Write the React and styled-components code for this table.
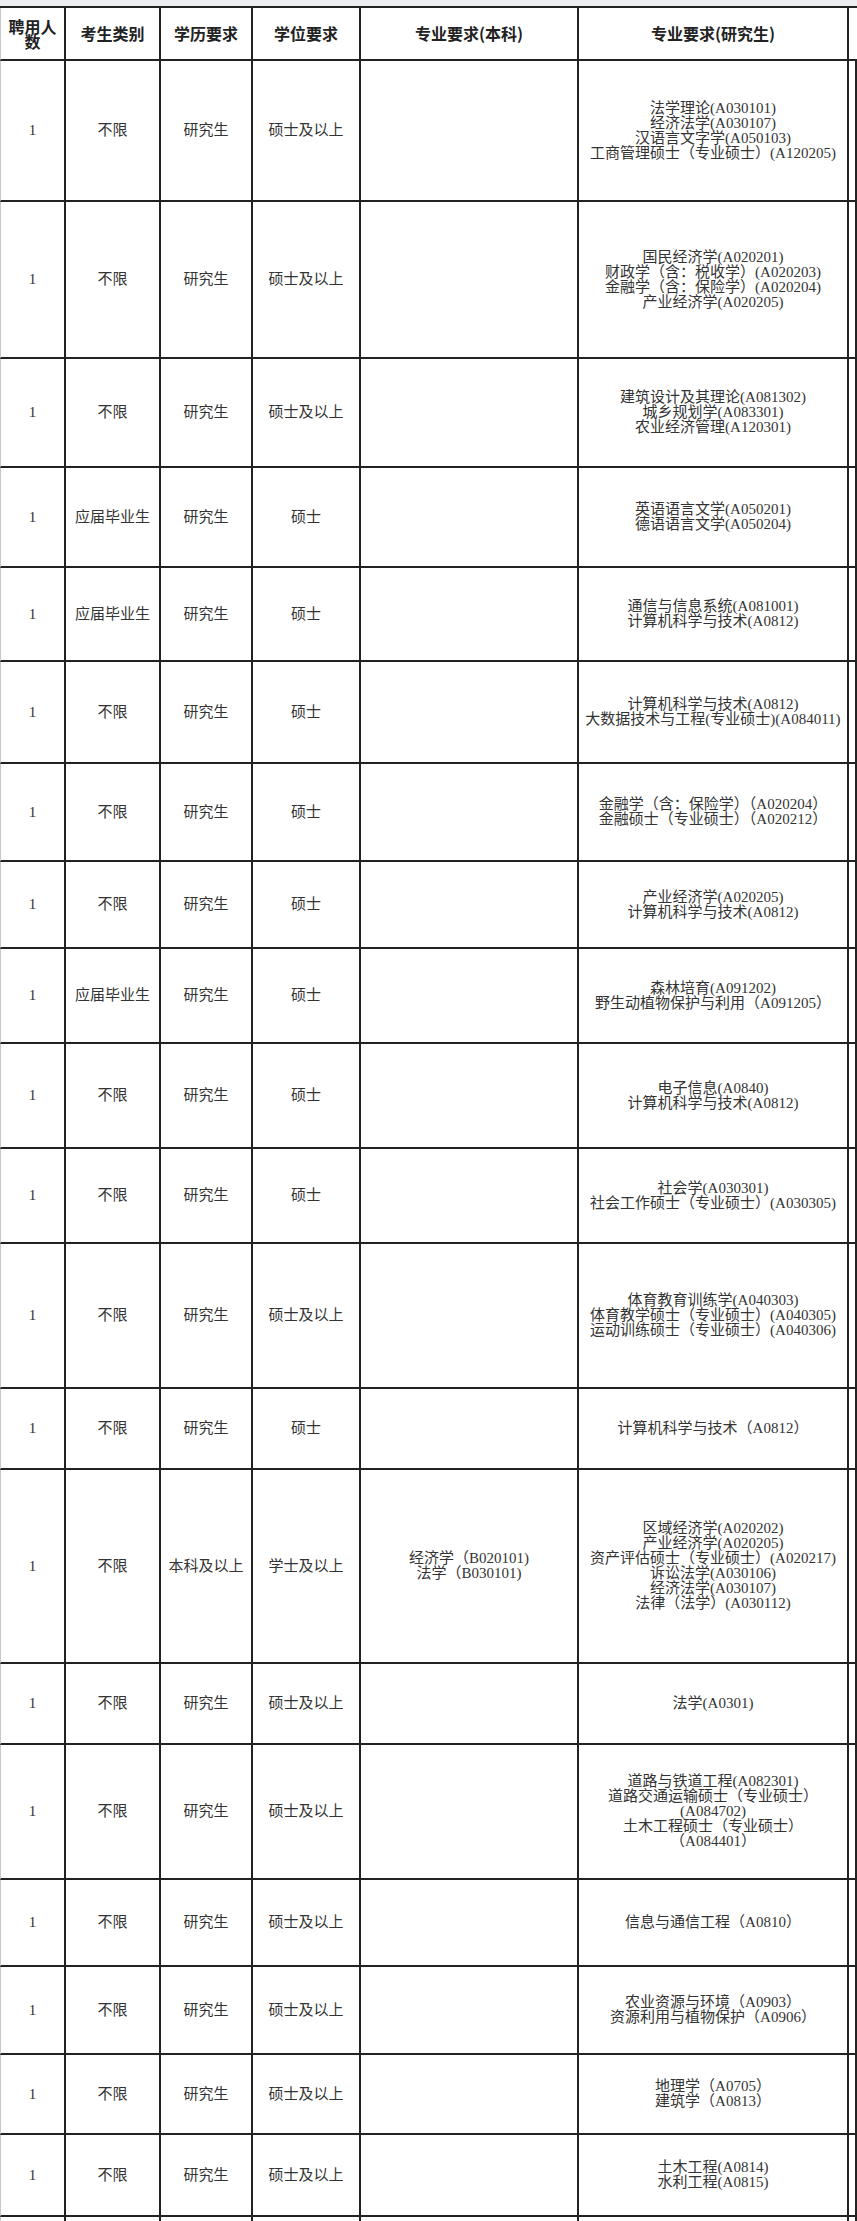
import React from "react";
import styled, { createGlobalStyle } from "styled-components";

const Global = createGlobalStyle`
  html, body {
    margin: 0;
    padding: 0;
    background: #ffffff;
    overflow: hidden;
  }
  * { box-sizing: border-box; }
`;

const Page = styled.div`
  width: 857px;
  background: #ffffff;
`;

const TopStrip = styled.div`
  height: 6px;
  background: #eceef2;
`;

const Table = styled.div`
  border-top: 2px solid #222;
  display: flex;
  flex-direction: column;
`;

const Row = styled.div`
  display: grid;
  grid-template-columns: 66px 95px 92px 108px 218px 270px 1fr;
  height: ${(p) => p.$h}px;
`;

const Cell = styled.div`
  border-right: 2px solid #222;
  border-bottom: 2px solid #222;
  border-left: ${(p) => (p.$first ? "1px solid #c9c9c9" : "none")};
  display: flex;
  flex-direction: column;
  align-items: center;
  justify-content: center;
  text-align: center;
  padding: 0 3px;
  overflow: hidden;
  white-space: nowrap;
`;

const HeadCell = styled(Cell)`
  font-family: "Noto Sans CJK SC", "Noto Sans", sans-serif;
  font-weight: 700;
  font-size: 16px;
  line-height: 15px;
  color: #222;
  white-space: normal;
  padding: 0 4px;
`;

const BodyCell = styled(Cell)`
  font-family: "Liberation Serif", "Noto Sans CJK SC", serif;
  font-size: 15px;
  line-height: 15px;
  color: #333;
`;

const Line = styled.span`
  display: block;
`;

const headers = [
  "聘用人数",
  "考生类别",
  "学历要求",
  "学位要求",
  "专业要求(本科)",
  "专业要求(研究生)",
  "",
];

const rows = [
  { h: 141, t: "不限", e: "研究生", d: "硕士及以上", b: [], g: ["法学理论(A030101)", "经济法学(A030107)", "汉语言文字学(A050103)", "工商管理硕士（专业硕士）(A120205)"] },
  { h: 157, t: "不限", e: "研究生", d: "硕士及以上", b: [], g: ["国民经济学(A020201)", "财政学（含：税收学）(A020203)", "金融学（含：保险学）(A020204)", "产业经济学(A020205)"] },
  { h: 109, t: "不限", e: "研究生", d: "硕士及以上", b: [], g: ["建筑设计及其理论(A081302)", "城乡规划学(A083301)", "农业经济管理(A120301)"] },
  { h: 100, t: "应届毕业生", e: "研究生", d: "硕士", b: [], g: ["英语语言文学(A050201)", "德语语言文学(A050204)"] },
  { h: 94, t: "应届毕业生", e: "研究生", d: "硕士", b: [], g: ["通信与信息系统(A081001)", "计算机科学与技术(A0812)"] },
  { h: 102, t: "不限", e: "研究生", d: "硕士", b: [], g: ["计算机科学与技术(A0812)", "大数据技术与工程(专业硕士)(A084011)"] },
  { h: 98, t: "不限", e: "研究生", d: "硕士", b: [], g: ["金融学（含：保险学）（A020204）", "金融硕士（专业硕士）（A020212）"] },
  { h: 87, t: "不限", e: "研究生", d: "硕士", b: [], g: ["产业经济学(A020205)", "计算机科学与技术(A0812)"] },
  { h: 95, t: "应届毕业生", e: "研究生", d: "硕士", b: [], g: ["森林培育(A091202)", "野生动植物保护与利用（A091205）"] },
  { h: 105, t: "不限", e: "研究生", d: "硕士", b: [], g: ["电子信息(A0840)", "计算机科学与技术(A0812)"] },
  { h: 95, t: "不限", e: "研究生", d: "硕士", b: [], g: ["社会学(A030301)", "社会工作硕士（专业硕士）(A030305)"] },
  { h: 145, t: "不限", e: "研究生", d: "硕士及以上", b: [], g: ["体育教育训练学(A040303)", "体育教学硕士（专业硕士）(A040305)", "运动训练硕士（专业硕士）(A040306)"] },
  { h: 81, t: "不限", e: "研究生", d: "硕士", b: [], g: ["计算机科学与技术（A0812）"] },
  { h: 194, t: "不限", e: "本科及以上", d: "学士及以上", b: ["经济学（B020101)", "法学（B030101)"], g: ["区域经济学(A020202)", "产业经济学(A020205)", "资产评估硕士（专业硕士）(A020217)", "诉讼法学(A030106)", "经济法学(A030107)", "法律（法学）(A030112)"] },
  { h: 81, t: "不限", e: "研究生", d: "硕士及以上", b: [], g: ["法学(A0301)"] },
  { h: 135, t: "不限", e: "研究生", d: "硕士及以上", b: [], g: ["道路与铁道工程(A082301)", "道路交通运输硕士（专业硕士）", "(A084702)", "土木工程硕士（专业硕士）", "（A084401）"] },
  { h: 87, t: "不限", e: "研究生", d: "硕士及以上", b: [], g: ["信息与通信工程（A0810）"] },
  { h: 88, t: "不限", e: "研究生", d: "硕士及以上", b: [], g: ["农业资源与环境（A0903）", "资源利用与植物保护（A0906）"] },
  { h: 80, t: "不限", e: "研究生", d: "硕士及以上", b: [], g: ["地理学（A0705）", "建筑学（A0813）"] },
  { h: 82, t: "不限", e: "研究生", d: "硕士及以上", b: [], g: ["土木工程(A0814)", "水利工程(A0815)"] },
];

const Lines = ({ items }) => items.map((l, i) => <Line key={i}>{l}</Line>);

export default function App() {
  return (
    <Page>
      <Global />
      <TopStrip />
      <Table>
        <Row $h={53}>
          {headers.map((h, i) => (
            <HeadCell key={i} $first={i === 0}>
              {h}
            </HeadCell>
          ))}
        </Row>
        {rows.map((r, i) => (
          <Row key={i} $h={r.h}>
            <BodyCell $first>1</BodyCell>
            <BodyCell>{r.t}</BodyCell>
            <BodyCell>{r.e}</BodyCell>
            <BodyCell>{r.d}</BodyCell>
            <BodyCell>
              <Lines items={r.b} />
            </BodyCell>
            <BodyCell>
              <Lines items={r.g} />
            </BodyCell>
            <BodyCell />
          </Row>
        ))}
        <Row $h={90}>
          <BodyCell $first />
          <BodyCell />
          <BodyCell />
          <BodyCell />
          <BodyCell />
          <BodyCell />
          <BodyCell />
        </Row>
      </Table>
    </Page>
  );
}
